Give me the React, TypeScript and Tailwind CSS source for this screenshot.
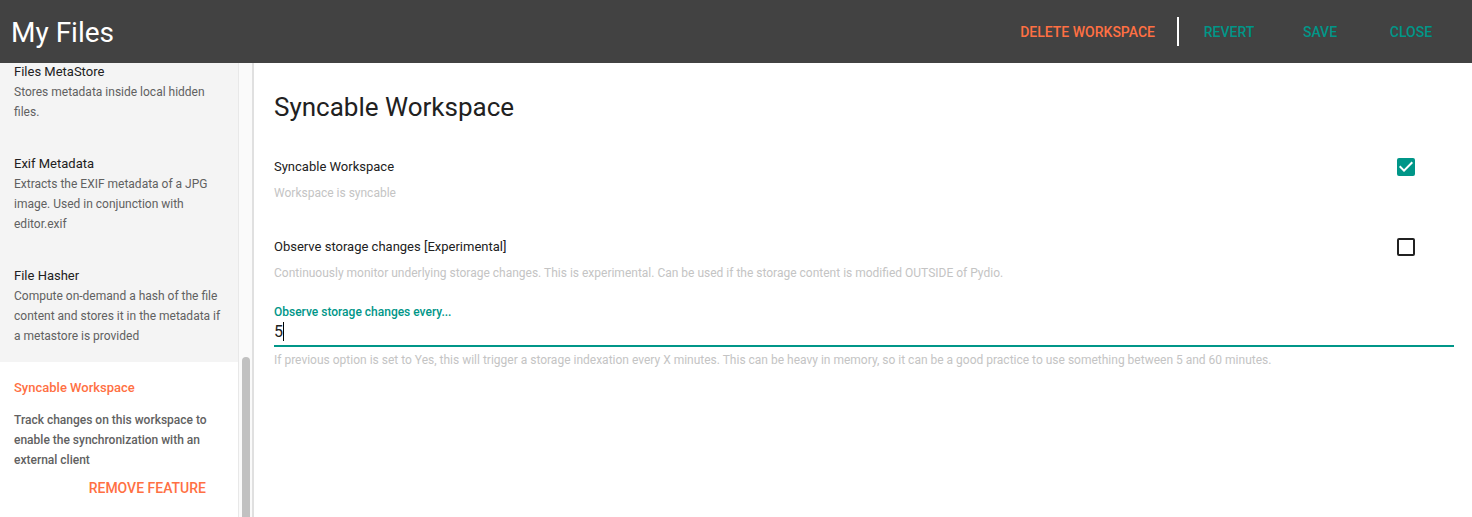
import { useState } from 'react';
import type { ReactNode } from 'react';

const features = [
  { name: 'Files MetaStore', text: 'Stores metadata inside local hidden files.' },
  { name: 'Exif Metadata', text: 'Extracts the EXIF metadata of a JPG image. Used in conjunction with editor.exif' },
  { name: 'File Hasher', text: 'Compute on-demand a hash of the file content and stores it in the metadata if a metastore is provided' },
];

function BarButton({ children }: { children: ReactNode }) {
  return (
    <button type="button" className="h-9 min-w-[88px] px-4 text-sm font-medium text-[#009688]">
      {children}
    </button>
  );
}

function Toggle({ id, label, hint, initial }: { id: string; label: string; hint: string; initial: boolean }) {
  const [on, setOn] = useState(initial);
  return (
    <div>
      <div className="flex h-6 items-center justify-between pr-9">
        <label htmlFor={id} className="text-[13px]">{label}</label>
        <span className="grid size-6 place-items-center">
          <input
            id={id}
            type="checkbox"
            checked={on}
            onChange={() => setOn(!on)}
            className="col-start-1 row-start-1 size-[18px] appearance-none rounded-xs border-2 border-[#212121] checked:border-[#009688] checked:bg-[#009688]"
          />
          {on && (
            <svg viewBox="0 0 24 24" className="pointer-events-none col-start-1 row-start-1 size-6 fill-white">
              <path d="M10 17l-5-5 1.41-1.41L10 14.17l7.59-7.59L19 8z" />
            </svg>
          )}
        </span>
      </div>
      <p className="mt-1 text-xs leading-5 text-[#c4c4c4]">{hint}</p>
    </div>
  );
}

export default function App() {
  const [minutes, setMinutes] = useState('5');
  return (
    <div className="flex h-screen flex-col overflow-hidden bg-white font-[Roboto,sans-serif] text-[#212121]">
      <header className="flex h-[63px] shrink-0 items-center justify-between bg-[#424242] pr-[17px] pl-[11px]">
        <h1 className="pt-0.5 text-[28px] text-white">My Files</h1>
        <div className="flex items-center gap-[3px]">
          <button type="button" className="h-9 px-4 text-sm font-medium text-[#ff7043]">DELETE WORKSPACE</button>
          <span className="mx-[3px] h-[29px] w-0.5 bg-white" />
          <BarButton>REVERT</BarButton>
          <BarButton>SAVE</BarButton>
          <BarButton>CLOSE</BarButton>
        </div>
      </header>
      <div className="flex min-h-0 flex-1">
        <aside className="flex w-[254px] shrink-0 overflow-hidden border-r-2 border-[#e0e0e0]">
          <div className="-mt-px flex w-[238px] shrink-0 flex-col bg-[#f4f4f4]">
            {features.map((f) => (
              <section key={f.name} className="px-3.5 pb-4 not-first:pt-4">
                <h2 className="text-[13px] leading-5">{f.name}</h2>
                <p className="text-xs leading-5 text-[#616161]">{f.text}</p>
              </section>
            ))}
            <section className="flex-1 bg-white px-3.5 pt-4 font-medium">
              <h2 className="text-[13px] leading-5 text-[#ff7043]">Syncable Workspace</h2>
              <p className="mt-3 text-xs leading-5 text-[#616161]">
                Track changes on this workspace to enable the synchronization with an external client
              </p>
              <div className="flex justify-end pr-0.5">
                <button type="button" className="h-9 px-4 text-sm text-[#ff7043]">REMOVE FEATURE</button>
              </div>
            </section>
          </div>
          <div className="flex flex-1 flex-col items-center border-l border-[#e8e8e8] bg-[#fafafa] pt-[294px]">
            <div className="w-2 flex-1 rounded-t-full bg-[#c1c1c1]" />
          </div>
        </aside>
        <main className="min-w-0 flex-1 pt-6 pr-[18px] pl-5">
          <h2 className="text-[26px] leading-10">Syncable Workspace</h2>
          <div className="mt-7 flex flex-col gap-8">
            <Toggle id="syncable" label="Syncable Workspace" hint="Workspace is syncable" initial />
            <Toggle
              id="observe"
              label="Observe storage changes [Experimental]"
              hint="Continuously monitor underlying storage changes. This is experimental. Can be used if the storage content is modified OUTSIDE of Pydio."
              initial={false}
            />
          </div>
          <label htmlFor="interval" className="mt-[19px] block text-xs leading-5 font-medium text-[#009688]">
            Observe storage changes every...
          </label>
          <div className="relative text-base">
            <input
              id="interval"
              value={minutes}
              onChange={(e) => setMinutes(e.target.value)}
              className="peer block h-[25px] w-full border-b-2 border-[#009688] pb-1 outline-none"
            />
            <span
              aria-hidden="true"
              className="pointer-events-none absolute top-0 h-[19px] w-px bg-black peer-focus:hidden"
              style={{ left: `${minutes.length}ch` }}
            />
          </div>
          <p className="mt-[3px] text-xs leading-5 text-[#c4c4c4]">
            If previous option is set to Yes, this will trigger a storage indexation every X minutes. This can be heavy in memory, so it can be a good practice to use something between 5 and 60 minutes.
          </p>
        </main>
      </div>
    </div>
  );
}
